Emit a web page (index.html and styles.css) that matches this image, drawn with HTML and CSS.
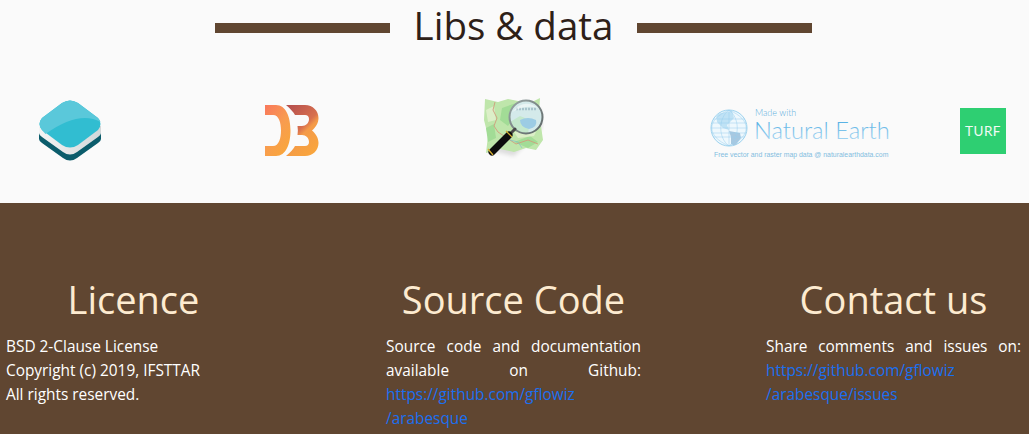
FILE: index.html
```html
<!DOCTYPE html>
<html lang="en">
<head>
    <meta charset="UTF-8">
    <meta name="viewport" content="width=device-width, initial-scale=1.0">
    <title>Libs &amp; data</title>
    <link rel="stylesheet" href="styles.css">
</head>
<body>
    <section class="libs">
        <div class="libs-title">
            <span class="bar"></span>
            <h2>Libs &amp; data</h2>
            <span class="bar"></span>
        </div>
        <div class="logos">
            <svg class="logo logo-stack" viewBox="0 0 62 61" aria-label="Mapbox layers">
                <defs>
                    <linearGradient id="stackWhite" x1="0" y1="0" x2="1" y2="0">
                        <stop offset="0" stop-color="#f4f4f4"/>
                        <stop offset="1" stop-color="#d4d8d9"/>
                    </linearGradient>
                </defs>
                <path fill="#0b5c6b" d="M0 39 L0 33 L31 50 L62 33 L62 39 Q62 41 59 43 L38 58 Q31 63 24 58 L3 43 Q0 41 0 39Z"/>
                <path fill="url(#stackWhite)" d="M0 26 L62 26 L62 33 Q62 35 59 37 L38 52 Q31 57 24 52 L3 37 Q0 35 0 33Z"/>
                <path fill="#31bdd1" d="M23 3 Q31 -2 39 3 L59 18 Q64 24 59 30 L39 45 Q31 50 23 45 L3 30 Q-2 24 3 18Z"/>
                <path fill="#5ac8da" d="M23 3 Q31 -2 39 3 L59 18 Q61 20 61.500 22 Q40 10 6.500 34 L3 30 Q-2 24 3 18Z"/>
            </svg>
            <svg class="logo logo-d3" viewBox="0 0 54 51" aria-label="D3">
                <defs>
                    <linearGradient id="d3D" x1="0" y1="0" x2="0.7" y2="1">
                        <stop offset="0" stop-color="#f9785c"/>
                        <stop offset="0.55" stop-color="#f89c50"/>
                        <stop offset="1" stop-color="#f9a63c"/>
                    </linearGradient>
                    <linearGradient id="d33" x1="0.2" y1="0" x2="0.8" y2="1">
                        <stop offset="0" stop-color="#b8524e"/>
                        <stop offset="0.45" stop-color="#d8704e"/>
                        <stop offset="0.56" stop-color="#f49a48"/>
                        <stop offset="1" stop-color="#f9a63c"/>
                    </linearGradient>
                </defs>
                <path fill="url(#d3D)" d="M0 0 H11 C21 0 25.500 12 25.500 25.500 C25.500 39 21 51 11 51 H0 V41 H8 C14 41 16 33 16 25.500 C16 18 14 10 8 10 H0Z"/>
                <path fill="url(#d33)" d="M21 0 H40 C48 0 53.500 6 53.500 13 C53.500 18 51 22 47 25.500 C51 29 53.500 33 53.500 38 C53.500 45 48 51 40 51 H21 C25.500 47 28.500 44 30 41 H40 C42.500 41 44 39.500 44 37 C44 33 41 30 37 30 H32.500 C33 27 33 24 32.500 21 H37 C41 21 44 18 44 14 C44 11.500 42.500 10 40 10 H30 C28.500 7 25.500 4 21 0Z"/>
            </svg>
            <svg class="logo logo-osm" viewBox="0 0 60 62" aria-label="OpenStreetMap">
                <defs>
                    <filter id="soft"><feGaussianBlur stdDeviation="0.45"/></filter>
                    <filter id="shade"><feGaussianBlur stdDeviation="2"/></filter>
                    <clipPath id="lens"><circle cx="42" cy="19" r="16"/></clipPath>
                    <linearGradient id="rim" x1="0" y1="0" x2="1" y2="1">
                        <stop offset="0" stop-color="#9aa6a6"/>
                        <stop offset="1" stop-color="#5c6666"/>
                    </linearGradient>
                </defs>
                <g filter="url(#soft)">
                    <path fill="#000" opacity="0.12" filter="url(#shade)" d="M5 52 L30 58 L58 30 L56 10 L30 30Z"/>
                    <path fill="#bfe6ab" d="M1 1 L14 4 L24 1 L34 3 L48 4 L56 0 L55 14 L59 42 L52 52 L42 50 L30 54 L16 51 L2 55 L4 38 L0 22Z"/>
                    <path fill="#a2dc96" d="M18 10 L32 5 L34 14 L24 28 L16 22Z M30 44 L46 38 L54 44 L44 50Z M2 30 L10 26 L12 40 L4 44Z"/>
                    <path fill="#dcefc8" d="M2 12 L10 8 L12 22 L4 24Z M30 34 L52 34 L50 38 L34 40Z"/>
                    <path fill="none" stroke="#d09c7c" stroke-width="0.900" d="M11 4 L9 12 L13 20 L10 28 L14 34 L20 38 L16 50 M20 38 L32 46 L44 42 L54 46"/>
                    <path fill="none" stroke="#78bccc" stroke-width="0.600" d="M26 42 L34 44 L38 50"/>
                    <circle cx="42" cy="19" r="16" fill="#d4eaea"/>
                    <g clip-path="url(#lens)">
                        <path fill="#c4e8cc" d="M26 24 L36 18 L46 22 L44 36 L30 34Z"/>
                        <path fill="#9ccce4" d="M36 22 Q44 18 52 22 Q54 29 45 31 Q36 29 36 22Z"/>
                        <path fill="none" stroke="#a8c4cc" stroke-width="2.500" stroke-dasharray="2 1" d="M32 11 H52"/>
                        <path fill="#fff" opacity="0.500" d="M28 14 Q40 0 54 10 Q42 6 28 14Z"/>
                    </g>
                    <circle cx="42" cy="19" r="16.500" fill="none" stroke="url(#rim)" stroke-width="2"/>
                    <path stroke="#4a4a4a" stroke-width="3" stroke-linecap="round" d="M31 31 L27 35"/>
                    <path stroke="#0d0d0d" stroke-width="7" stroke-linecap="round" d="M25 37 L8 54"/>
                    <path stroke="#d8b030" stroke-width="1.200" d="M22 33 L28 39 M4 51 L9 57"/>
                </g>
            </svg>
            <svg class="logo logo-earth" viewBox="0 0 180 52" aria-label="Made with Natural Earth">
                <defs>
                    <linearGradient id="earthText" x1="0" y1="0" x2="0" y2="1">
                        <stop offset="0" stop-color="#3fa6e0"/>
                        <stop offset="1" stop-color="#b4dcf4"/>
                    </linearGradient>
                    <clipPath id="globe"><circle cx="19" cy="20" r="18"/></clipPath>
                </defs>
                <circle cx="19" cy="20" r="18" fill="#eef8fd" stroke="#9cd2ee"/>
                <g clip-path="url(#globe)">
                    <path fill="#bfe2f5" d="M6 6 L22 3 L24 10 L17 17 L19 22 L13 20 L7 14Z"/>
                    <path fill="#a8c8e0" d="M19 23 L30 25 L31 30 L25 38 L21 36 L21 29Z"/>
                    <path fill="none" stroke="#98cfee" stroke-width="0.500" d="M1 20 H37 M3 11 H35 M3 29 H35 M1 15 H37 M1 25 H37 M19 2 V38 M19 2 C8 10 8 30 19 38 M19 2 C30 10 30 30 19 38 M19 2 C-4 12 -4 28 19 38 M19 2 C42 12 42 28 19 38"/>
                </g>
                <text class="earth-made" x="45" y="8">Made with</text>
                <text class="earth-name" x="44" y="31" fill="url(#earthText)">Natural Earth</text>
                <text class="earth-note" x="4" y="49">Free vector and raster map data @ naturalearthdata.com</text>
            </svg>
            <div class="logo-turf">TURF</div>
        </div>
    </section>

    <footer class="footer">
        <div class="footer-col">
            <h2>Licence</h2>
            <p>BSD 2-Clause License<br>Copyright (c) 2019, IFSTTAR<br>All rights reserved.</p>
        </div>
        <div class="footer-col">
            <h2>Source Code</h2>
            <p>Source code and documentation available on Github: <a href="#">https://github.com/gflowiz<br>/arabesque</a></p>
        </div>
        <div class="footer-col">
            <h2>Contact us</h2>
            <p>Share comments and issues on: <a href="#">https://github.com/gflowiz<br>/arabesque/issues</a></p>
        </div>
    </footer>
</body>
</html>
```

FILE: styles.css
```css
html, body {
    height: 100%;
    overflow: hidden;
}

body {
    margin: 0;
    font-family: 'Open Sans', 'Noto Sans', sans-serif;
    background-color: #fafafa;
}

.libs {
    height: 203px;
    box-sizing: border-box;
}

.libs-title {
    display: flex;
    align-items: center;
    justify-content: center;
    gap: 24px;
    height: 50px;
    padding-right: 2px;
}

.libs-title h2 {
    margin: 0;
    font-size: 38.500px;
    font-weight: 400;
    line-height: 50px;
    color: #2e2018;
}

.bar {
    width: 175px;
    height: 10px;
    margin-top: 6px;
    background-color: #604631;
}

.logos {
    display: flex;
    align-items: flex-start;
    margin-top: 50px;
    padding-left: 39px;
}

.logo {
    display: block;
    flex: none;
}

.logo-stack {
    width: 62px;
    height: 61px;
}

.logo-d3 {
    width: 54px;
    height: 51px;
    margin: 5px 0 0 164px;
}

.logo-osm {
    width: 60px;
    height: 62px;
    margin: -2px 0 0 165px;
}

.logo-earth {
    width: 180px;
    height: 52px;
    margin: 8px 0 0 166px;
}

.earth-made {
    font-family: 'Lato', sans-serif;
    font-weight: 300;
    font-size: 9px;
    fill: #5fb0e0;
}

.earth-name {
    font-family: 'Lato', sans-serif;
    font-weight: 300;
    font-size: 23.700px;
}

.earth-note {
    font-family: 'Liberation Sans', sans-serif;
    font-size: 6.900px;
    fill: #82bde0;
}

.logo-turf {
    flex: none;
    width: 46px;
    height: 46px;
    margin: 8px 0 0 70px;
    background-color: #2ecf72;
    color: #f2fbf5;
    font-family: 'Lato', sans-serif;
    font-size: 13.500px;
    font-weight: 400;
    line-height: 47px;
    text-align: center;
    letter-spacing: 0.5px;
}

.footer {
    display: flex;
    justify-content: space-between;
    height: 231px;
    box-sizing: border-box;
    padding: 72px 8px 0 6px;
    background-color: #604631;
    color: #fff;
}

.footer-col {
    width: 255px;
}

.footer-col h2 {
    margin: 0 0 12px;
    font-size: 38px;
    font-weight: 400;
    line-height: 48px;
    text-align: center;
    color: #fdebd0;
}

.footer-col p {
    margin: 0;
    font-size: 15.400px;
    line-height: 24px;
    text-align: justify;
}

.footer-col a {
    color: #1b6ff0;
    text-decoration: none;
}
```
